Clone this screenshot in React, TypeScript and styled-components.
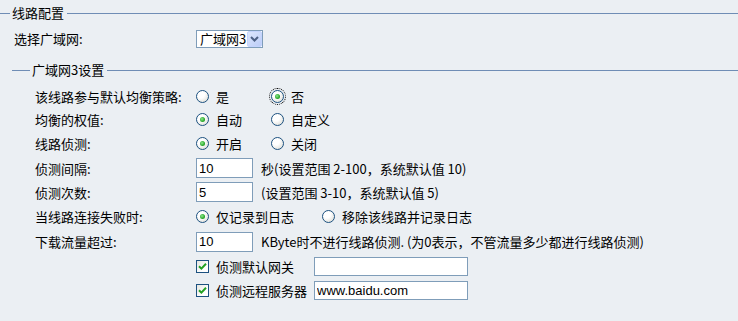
import React from 'react';
import styled, { createGlobalStyle } from 'styled-components';

const GlobalStyle = createGlobalStyle`
  html, body {
    margin: 0;
    padding: 0;
    background: #ebeff3;
  }
  body {
    font-family: "Noto Sans CJK SC", "DejaVu Sans", sans-serif;
    font-size: 13px;
    color: #000;
  }
`;

const Page = styled.div`
  width: 738px;
  height: 321px;
  padding-top: 6px;
  box-sizing: border-box;
  overflow: hidden;
`;

const Legend = styled.div<{ $lead: number }>`
  display: flex;
  align-items: center;
  height: 14px;
  line-height: 14px;

  &::before,
  &::after {
    content: '';
    height: 1px;
    background: #6f8db5;
  }
  &::before {
    width: ${(p) => p.$lead}px;
    margin-right: 2px;
  }
  &::after {
    flex: 1;
    margin-left: 3px;
  }
`;

const Body = styled.div`
  padding-left: 12px;
`;

const WanRow = styled.div`
  display: grid;
  grid-template-columns: 184px auto;
  align-items: center;
  height: 18px;
  margin: 9px 0 16px;
  padding-left: 2px;
`;

const SelectBox = styled.div`
  display: flex;
  align-items: center;
  justify-content: space-between;
  width: 67px;
  height: 18px;
  margin-left: -2px;
  box-sizing: border-box;
  border: 1px solid #7f9db9;
  background: #fff;
  padding-left: 3px;
`;

const SelectButton = styled.span`
  display: flex;
  align-items: center;
  justify-content: center;
  width: 15px;
  height: 16px;
  box-sizing: border-box;
  border: 1px solid #c3d3fd;
  border-radius: 2px;
  background: linear-gradient(135deg, #dce6fd 0%, #bccdf7 100%);
`;

const Rows = styled.div`
  margin-top: 7px;
  padding-left: 23px;
`;

const Row = styled.div<{ $h: number }>`
  display: grid;
  grid-template-columns: 161px 1fr;
  align-items: center;
  height: ${(p) => p.$h}px;
`;

const Label = styled.span`
  white-space: nowrap;
`;

const Value = styled.div`
  display: flex;
  align-items: center;
  white-space: nowrap;
`;

const Option = styled.label<{ $w?: number }>`
  display: flex;
  align-items: center;
  gap: 7px;
  width: ${(p) => (p.$w ? `${p.$w}px` : 'auto')};
`;

const Radio = styled.span<{ $on?: boolean; $focus?: boolean }>`
  position: relative;
  flex: none;
  width: 13px;
  height: 13px;
  box-sizing: border-box;
  border: 1px solid #1c5180;
  border-radius: 50%;
  background: radial-gradient(circle at 35% 30%, #ffffff 35%, #d6d6ce 100%);
  outline: ${(p) => (p.$focus ? '1px dotted #000' : 'none')};
  outline-offset: 1px;

  &::after {
    content: '';
    display: ${(p) => (p.$on ? 'block' : 'none')};
    position: absolute;
    left: 3px;
    top: 3px;
    width: 5px;
    height: 5px;
    border-radius: 50%;
    background: radial-gradient(circle at 40% 40%, #8fe88f 0%, #2aa82a 60%, #1c8c1c 100%);
  }
`;

const Check = styled.span`
  display: flex;
  align-items: center;
  justify-content: center;
  flex: none;
  width: 13px;
  height: 13px;
  box-sizing: border-box;
  border: 1px solid #1c5180;
  background: linear-gradient(135deg, #e6e6e0 0%, #ffffff 70%);
`;

const CheckText = styled.span`
  width: 98px;
  margin-left: 7px;
`;

const TextBox = styled.input<{ $w: number; $h: number }>`
  width: ${(p) => p.$w}px;
  height: ${(p) => p.$h}px;
  box-sizing: border-box;
  border: 1px solid #7f9db9;
  background: #fff;
  padding: 0 2px;
  margin: 0;
  font-family: "Liberation Sans", Arial, sans-serif;
  font-size: 13px;
  color: #000;
  outline: none;
`;

const Hint = styled.span`
  margin-left: 8px;
`;

const CheckMark = () => (
  <svg width="9" height="9" viewBox="0 0 9 9">
    <path d="M1 4.2 L3.4 6.6 L8 1.8" fill="none" stroke="#21a121" strokeWidth="2" />
  </svg>
);

const Chevron = () => (
  <svg width="9" height="6" viewBox="0 0 9 6">
    <path d="M1 1 L4.5 4.5 L8 1" fill="none" stroke="#4d6185" strokeWidth="2" />
  </svg>
);

const RadioOption: React.FC<{ text: string; on?: boolean; focus?: boolean; w?: number }> = ({
  text,
  on,
  focus,
  w,
}) => (
  <Option $w={w}>
    <Radio $on={on} $focus={focus} />
    <span>{text}</span>
  </Option>
);

export default function App() {
  return (
    <Page>
      <GlobalStyle />
      <Legend $lead={10}>线路配置</Legend>
      <Body>
        <WanRow>
          <Label>选择广域网:</Label>
          <SelectBox>
            <span>广域网3</span>
            <SelectButton>
              <Chevron />
            </SelectButton>
          </SelectBox>
        </WanRow>

        <Legend $lead={18}>广域网3设置</Legend>
        <Rows>
          <Row $h={24}>
            <Label>该线路参与默认均衡策略:</Label>
            <Value>
              <RadioOption text="是" w={75} />
              <RadioOption text="否" on focus />
            </Value>
          </Row>
          <Row $h={23}>
            <Label>均衡的权值:</Label>
            <Value>
              <RadioOption text="自动" on w={75} />
              <RadioOption text="自定义" />
            </Value>
          </Row>
          <Row $h={25}>
            <Label>线路侦测:</Label>
            <Value>
              <RadioOption text="开启" on w={75} />
              <RadioOption text="关闭" />
            </Value>
          </Row>
          <Row $h={24}>
            <Label>侦测间隔:</Label>
            <Value>
              <TextBox $w={57} $h={20} defaultValue="10" readOnly />
              <Hint>秒(设置范围 2-100，系统默认值 10)</Hint>
            </Value>
          </Row>
          <Row $h={24}>
            <Label>侦测次数:</Label>
            <Value>
              <TextBox $w={57} $h={20} defaultValue="5" readOnly />
              <Hint>(设置范围 3-10，系统默认值 5)</Hint>
            </Value>
          </Row>
          <Row $h={25}>
            <Label>当线路连接失败时:</Label>
            <Value>
              <RadioOption text="仅记录到日志" on w={126} />
              <RadioOption text="移除该线路并记录日志" />
            </Value>
          </Row>
          <Row $h={25}>
            <Label>下载流量超过:</Label>
            <Value>
              <TextBox $w={57} $h={20} defaultValue="10" readOnly />
              <Hint>KByte时不进行线路侦测. (为0表示，不管流量多少都进行线路侦测)</Hint>
            </Value>
          </Row>
          <Row $h={24}>
            <span />
            <Value>
              <Check>
                <CheckMark />
              </Check>
              <CheckText>侦测默认网关</CheckText>
              <TextBox $w={154} $h={19} defaultValue="" readOnly />
            </Value>
          </Row>
          <Row $h={24}>
            <span />
            <Value>
              <Check>
                <CheckMark />
              </Check>
              <CheckText>侦测远程服务器</CheckText>
              <TextBox $w={154} $h={19} defaultValue="www.baidu.com" readOnly />
            </Value>
          </Row>
        </Rows>
      </Body>
    </Page>
  );
}
